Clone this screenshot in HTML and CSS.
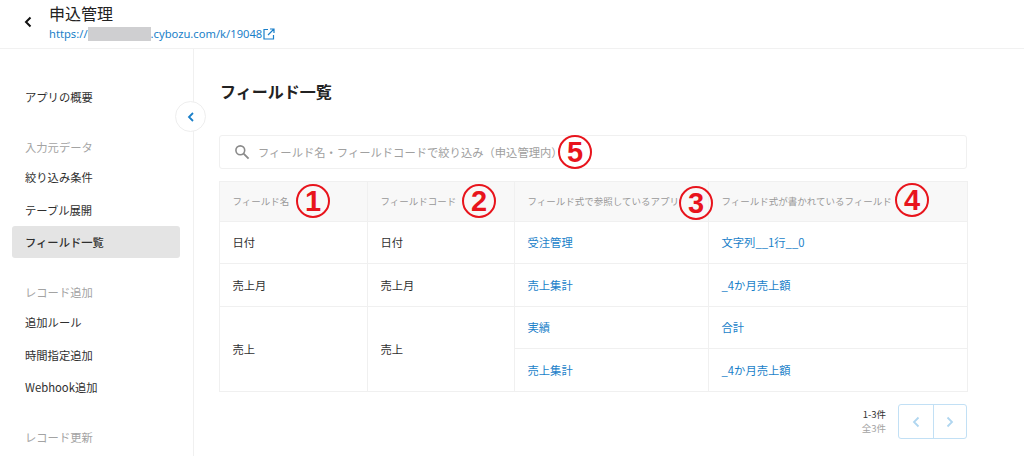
FILE: index.html
```html
<!DOCTYPE html>
<html lang="ja">
<head>
<meta charset="utf-8">
<title>フィールド一覧</title>
<link rel="stylesheet" href="styles.css">
</head>
<body>
<header class="topbar">
  <svg class="back" width="10" height="12" viewBox="0 0 10 12"><path d="M7.5 1.5 3 6l4.5 4.5" fill="none" stroke="#111" stroke-width="2"/></svg>
  <div class="app">
    <div class="app-name">申込管理</div>
    <div class="app-url">https://<span class="mask"></span>.cybozu.com/k/19048<svg class="ext" width="12" height="12" viewBox="0 0 12 12"><path d="M5 1.5H1v9.5h9.5V7M7 1h4v4M11 1 5 7" fill="none" stroke="#1a7fc9" stroke-width="1.2"/></svg></div>
  </div>
</header>
<div class="body">
  <nav class="side">
    <a class="item first">アプリの概要</a>
    <div class="group">入力元データ</div>
    <a class="item">絞り込み条件</a>
    <a class="item">テーブル展開</a>
    <a class="item active">フィールド一覧</a>
    <div class="group">レコード追加</div>
    <a class="item">追加ルール</a>
    <a class="item">時間指定追加</a>
    <a class="item">Webhook追加</a>
    <div class="group">レコード更新</div>
    <button class="collapse"><svg width="8" height="12" viewBox="0 0 8 12"><path d="M6 2 2 6l4 4" fill="none" stroke="#1a7fc9" stroke-width="1.8"/></svg></button>
  </nav>
  <main class="main">
    <h1 class="title">フィールド一覧</h1>
    <div class="search">
      <svg class="lens" width="16" height="16" viewBox="0 0 16 16"><circle cx="6.3" cy="6.3" r="4.4" fill="none" stroke="#8a8a8a" stroke-width="1.6"/><path d="m9.6 9.6 5 5" stroke="#8a8a8a" stroke-width="1.8"/></svg>
      <span class="ph">フィールド名・フィールドコードで絞り込み（申込管理内）</span>
      <span class="mark m5">5</span>
    </div>
    <table class="tbl">
      <colgroup><col class="c1"><col class="c2"><col class="c3"><col class="c4"></colgroup>
      <thead>
        <tr>
          <th>フィールド名<span class="mark m1">1</span></th>
          <th>フィールドコード<span class="mark m2">2</span></th>
          <th>フィールド式で参照しているアプリ<span class="mark m3">3</span></th>
          <th>フィールド式が書かれているフィールド<span class="mark m4">4</span></th>
        </tr>
      </thead>
      <tbody>
        <tr><td>日付</td><td>日付</td><td><a>受注管理</a></td><td><a>文字列__1行__0</a></td></tr>
        <tr><td>売上月</td><td>売上月</td><td><a>売上集計</a></td><td><a>_4か月売上額</a></td></tr>
        <tr><td rowspan="2">売上</td><td rowspan="2">売上</td><td><a>実績</a></td><td><a>合計</a></td></tr>
        <tr><td><a>売上集計</a></td><td><a>_4か月売上額</a></td></tr>
      </tbody>
    </table>
    <div class="pager">
      <div class="count"><div class="range">1-3件</div><div class="total">全3件</div></div>
      <div class="btns">
        <span class="pbtn"><svg width="8" height="12" viewBox="0 0 8 12"><path d="M6.5 1.5 2 6l4.5 4.5" fill="none" stroke="#b0d6f0" stroke-width="1.8"/></svg></span>
        <span class="pbtn"><svg width="8" height="12" viewBox="0 0 8 12"><path d="M1.5 1.5 6 6l-4.5 4.5" fill="none" stroke="#b0d6f0" stroke-width="1.8"/></svg></span>
      </div>
    </div>
  </main>
</div>
</body>
</html>
```
FILE: styles.css
```css
* { box-sizing: border-box; }
html, body { margin: 0; height: 456px; overflow: hidden; background: #fff; }
body { font-family: "Noto Sans CJK JP", "Noto Sans", sans-serif; color: #2f2f2f; font-size: 11.3px; }

.topbar { height: 49px; display: flex; align-items: flex-start; border-bottom: 1px solid #f1f1f1; padding-left: 23px; }
.back { margin-top: 16px; }
.app { margin-left: 16px; margin-top: 2px; }
.app-name { font-size: 16px; line-height: 22px; color: #222; }
.app-url { font-family: "Noto Sans", sans-serif; font-size: 11.2px; line-height: 17px; margin-top: 1px; color: #1a7fc9; display: flex; align-items: center; }
.mask { width: 63px; height: 14px; background: #cfcfd1; }
.ext { margin-left: 1px; }

.body { display: flex; height: 407px; }
.side { width: 194px; flex: none; border-right: 1px solid #f0f0f0; padding: 32px 13px 0 12px; position: relative; }
.item { display: flex; align-items: center; height: 32.3px; padding-left: 13px; color: #2f2f2f; border-radius: 3px; }
.item.active { background: #e4e4e4; font-weight: 500; }
.group { color: #a3a3a3; height: 28px; display: flex; align-items: center; padding-left: 13px; margin-top: 20px; }
.collapse { position: absolute; right: -13px; top: 52px; width: 31px; height: 31px; border-radius: 50%; background: #fff; border: 1px solid #eee; display: flex; align-items: center; justify-content: center; padding: 0; }

.main { flex: 1; padding: 31px 0 0 25px; min-width: 0; }
.title { margin: 0; padding-left: 1px; font-size: 16px; line-height: 22px; font-weight: 700; color: #222; }
.search { width: 748px; height: 34px; margin-top: 33px; border: 1px solid #f0f0f0; border-radius: 3px; display: flex; align-items: center; padding-left: 14px; position: relative; }
.ph { margin-left: 8px; color: #a0a0a0; font-size: 11.3px; }
.lens { flex: none; }

.tbl { width: 748px; margin-top: 12px; border-collapse: collapse; table-layout: fixed; }
.c1 { width: 148px; } .c2 { width: 147px; } .c3 { width: 194px; } .c4 { width: 259px; }
.tbl th, .tbl td { border: 1px solid #f0f0f0; padding: 0 0 0 12.5px; text-align: left; position: relative; }
.tbl th { height: 39.5px; background: #f8f8f8; font-weight: 400; color: #999; font-size: 9.5px; }
.tbl td { height: 42.5px; color: #2f2f2f; }
.tbl a { color: #1a7fc9; }

.mark { position: absolute; z-index: 1; width: 34px; height: 34px; border: 2.5px solid #e8141c; border-radius: 50%; display: flex; align-items: center; justify-content: center; color: #e8141c; font-family: "Liberation Sans", Arial, sans-serif; font-weight: 700; font-size: 29px; line-height: 1; }
.m1 { left: 76px; top: 2px; } .m2 { left: 94px; top: 2px; } .m3 { left: 164px; top: 4px; } .m4 { left: 186px; top: 1px; }
.m5 { left: 338px; top: -1px; }

.pager { width: 748px; display: flex; justify-content: flex-end; align-items: center; margin-top: 12.5px; }
.count { text-align: right; font-size: 9.5px; line-height: 13.5px; margin-right: 12px; }
.range { color: #333; }
.total { color: #a3a3a3; }
.btns { display: flex; border: 1px solid #c2e0f5; border-radius: 3px; height: 35px; }
.pbtn { width: 33.5px; display: flex; align-items: center; justify-content: center; }
.pbtn + .pbtn { border-left: 1px solid #c2e0f5; }
```
